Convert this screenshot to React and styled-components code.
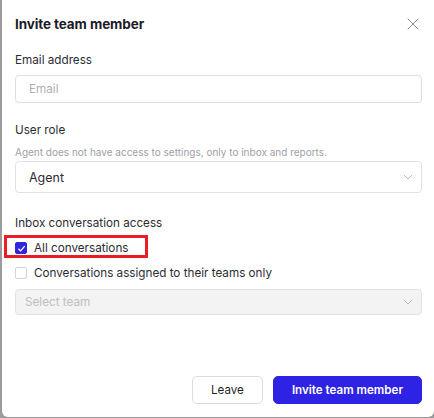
import React from "react";
import styled, { createGlobalStyle } from "styled-components";
import { X, ChevronDown } from "lucide-react";

const GlobalStyle = createGlobalStyle`
  html, body {
    margin: 0;
    padding: 0;
    background: #9c9c9c;
  }
  body {
    font-family: Inter, "Noto Sans", sans-serif;
    -webkit-font-smoothing: antialiased;
  }
`;

export default function App() {
  return (
    <>
      <GlobalStyle />
      <Modal>
        <Header>
          <Title>Invite team member</Title>
          <CloseBtn aria-label="Close">
            <X size={20} strokeWidth={1.2} />
          </CloseBtn>
        </Header>

        <Label>Email address</Label>
        <Input placeholder="Email" />

        <Label $top={17}>User role</Label>
        <Hint>Agent does not have access to settings, only to inbox and reports.</Hint>
        <Select>
          Agent
          <ChevronDown size={16} strokeWidth={1.2} />
        </Select>

        <Label $top={20}>Inbox conversation access</Label>
        <CheckRow $top={5}>
          <Box $checked>
            <svg width="9" height="9" viewBox="0 0 10 10">
              <path d="M1.5 5.2 L4 7.6 L8.6 2.4" fill="none" stroke="#fff" strokeWidth="1.4" />
            </svg>
          </Box>
          All conversations
          <Highlight />
        </CheckRow>
        <CheckRow $top={5}>
          <Box />
          Conversations assigned to their teams only
        </CheckRow>
        <Select $disabled $height={26}>
          Select team
          <ChevronDown size={16} strokeWidth={1.2} />
        </Select>

        <Footer>
          <Button>Leave</Button>
          <Button $primary>Invite team member</Button>
        </Footer>
      </Modal>
    </>
  );
}

const Modal = styled.div`
  box-sizing: border-box;
  margin-left: 2px;
  width: 432px;
  height: 417px;
  background: #fff;
  border-radius: 0 0 6px 6px;
  padding: 14px 12px 13px 13px;
  display: flex;
  flex-direction: column;
`;

const Header = styled.div`
  display: flex;
  align-items: center;
  justify-content: space-between;
  height: 20px;
`;

const Title = styled.div`
  font-size: 13.5px;
  font-weight: 700;
  color: #1b1b2a;
  letter-spacing: -0.1px;
`;

const CloseBtn = styled.button`
  border: 0;
  background: transparent;
  padding: 0;
  margin-right: -1px;
  color: #8f8f8f;
  display: flex;
`;

const Label = styled.div`
  margin-top: ${(p) => p.$top ?? 16}px;
  font-size: 11.7px;
  line-height: 20px;
  color: #2c2c34;
`;

const Input = styled.input`
  box-sizing: border-box;
  margin-top: 5px;
  width: 100%;
  height: 28px;
  border: 1px solid #dedede;
  border-radius: 4px;
  padding: 0 13px;
  font-family: inherit;
  font-size: 11.7px;
  outline: 0;
  &::placeholder {
    color: #b0b0b0;
  }
`;

const Hint = styled.div`
  margin-top: 4px;
  font-size: 10px;
  line-height: 16px;
  color: #a0a0a6;
`;

const Select = styled.div`
  box-sizing: border-box;
  margin-top: ${(p) => (p.$disabled ? 6 : 1)}px;
  height: ${(p) => p.$height ?? 32}px;
  border: 1px solid #e2e2e2;
  border-radius: 4px;
  padding: 0 5px 0 ${(p) => (p.$disabled ? 9 : 13)}px;
  display: flex;
  align-items: center;
  justify-content: space-between;
  font-size: ${(p) => (p.$disabled ? 11.7 : 12.5)}px;
  color: ${(p) => (p.$disabled ? "#c0c0c0" : "#2c2c34")};
  background: ${(p) => (p.$disabled ? "#f3f3f3" : "#fff")};
  svg {
    color: #a8a8a8;
  }
`;

const CheckRow = styled.div`
  position: relative;
  margin-top: ${(p) => p.$top}px;
  display: flex;
  align-items: center;
  gap: 7px;
  height: 20px;
  font-size: 11.7px;
  color: #2c2c34;
`;

const Box = styled.span`
  box-sizing: border-box;
  width: 12px;
  height: 12px;
  border-radius: 2px;
  border: 1px solid ${(p) => (p.$checked ? "#3126e0" : "#d4d4d4")};
  background: ${(p) => (p.$checked ? "#3126e0" : "#fff")};
  display: flex;
  align-items: center;
  justify-content: center;
`;

const Highlight = styled.span`
  position: absolute;
  left: -11px;
  top: -3px;
  width: 144px;
  height: 23px;
  box-sizing: border-box;
  border: 3px solid #ea1c24;
  pointer-events: none;
`;

const Footer = styled.div`
  margin-top: auto;
  display: flex;
  justify-content: flex-end;
  gap: 10px;
`;

const Button = styled.button`
  box-sizing: border-box;
  height: 28px;
  padding: 0 18px;
  border-radius: 5px;
  font-family: inherit;
  font-size: 11.6px;
  font-weight: ${(p) => (p.$primary ? 600 : 400)};
  border: 1px solid ${(p) => (p.$primary ? "#2e22e4" : "#dcdcdc")};
  background: ${(p) => (p.$primary ? "#2e22e4" : "#fff")};
  color: ${(p) => (p.$primary ? "#fff" : "#1f1f28")};
`;
